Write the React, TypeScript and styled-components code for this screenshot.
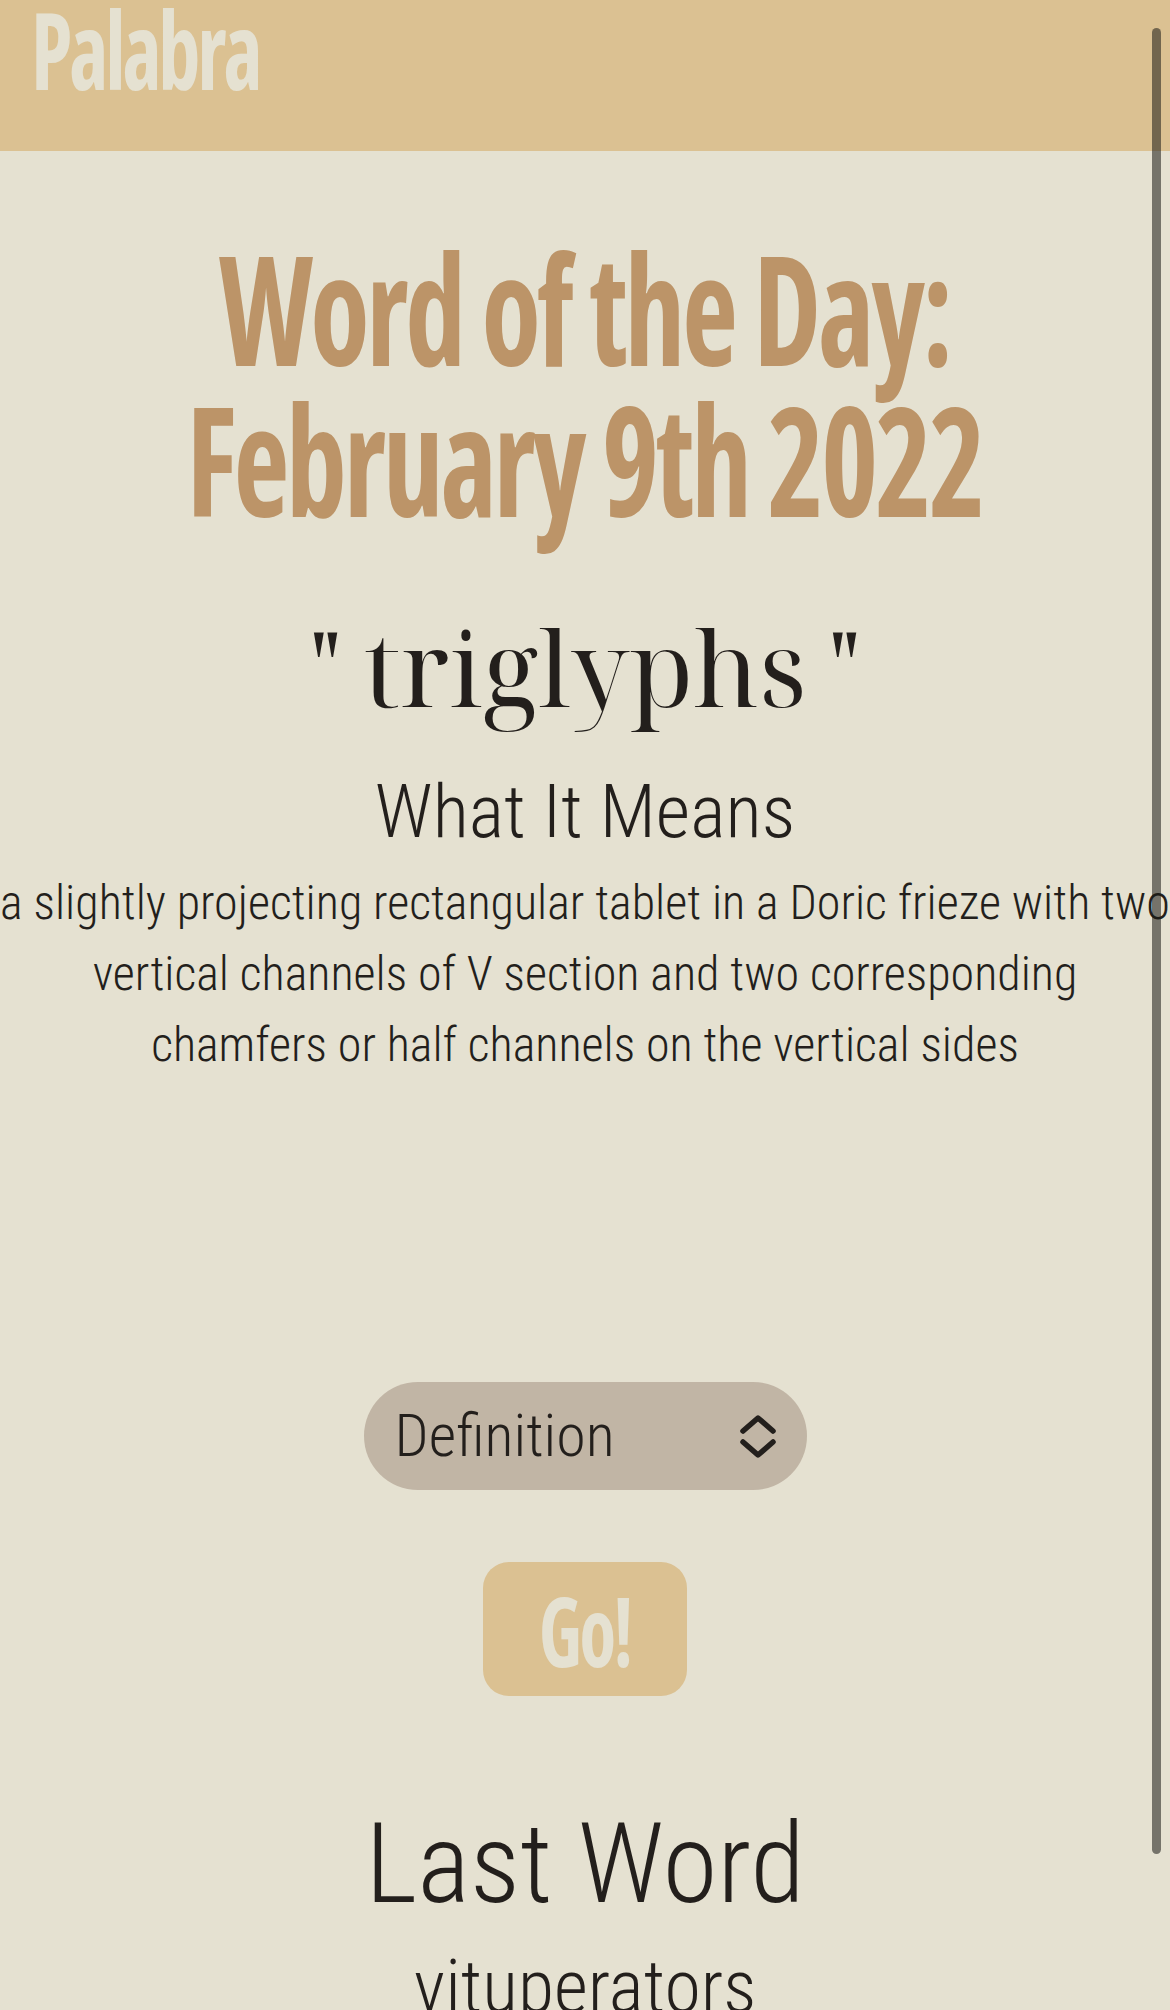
import React from "react";
import styled, { createGlobalStyle } from "styled-components";

const GlobalStyle = createGlobalStyle`
  html, body { margin: 0; padding: 0; }
  body {
    background: #e5e1d1;
    color: #231f1c;
    font-family: "Roboto Condensed", Roboto, sans-serif;
    overflow: hidden;
  }
`;

const Page = styled.div`
  width: 1170px;
  min-height: 2010px;
  background: #e5e1d1;
`;

const Header = styled.header`
  height: 151px;
  background: #dbc192;
  display: flex;
  align-items: flex-start;
  padding-left: 31px;
  box-sizing: border-box;
`;

const Logo = styled.h1`
  margin: 0;
  font-family: "Open Sans", sans-serif;
  font-stretch: 75%;
  font-weight: 700;
  font-size: 108px;
  line-height: 98px;
  letter-spacing: -4px;
  color: #e5e1d1;
  transform: scaleX(0.78);
  transform-origin: left center;
`;

const Main = styled.main`
  display: flex;
  flex-direction: column;
  align-items: center;
  text-align: center;
`;

const Title = styled.h2`
  margin: 81px 0 0;
  font-family: "Open Sans", sans-serif;
  font-stretch: 75%;
  font-weight: 700;
  font-size: 152px;
  line-height: 151px;
  letter-spacing: -4px;
  color: #bc9468;
  transform: scaleX(0.8);
`;

const Word = styled.div`
  margin-top: 68px;
  font-family: "Noto Serif Display", "Liberation Serif", serif;
  font-size: 104px;
  line-height: 130px;
  color: #231f1c;
`;

const Subhead = styled.h3`
  margin: 34px 0 0;
  font-weight: 300;
  font-size: 75px;
  line-height: 90px;
`;

const Definition = styled.p`
  margin: 11px 0 0;
  width: 1170px;
  font-weight: 300;
  font-size: 48px;
  line-height: 71px;
`;

const SelectWrap = styled.div`
  margin-top: 302px;
  width: 443px;
  height: 108px;
  border-radius: 54px;
  background: #c1b5a5;
  display: flex;
  align-items: center;
  justify-content: space-between;
  padding: 0 28px 0 31px;
  box-sizing: border-box;
`;

const SelectText = styled.span`
  font-weight: 300;
  font-size: 60px;
  line-height: 1;
  color: #231f1c;
`;

const GoButton = styled.button`
  margin-top: 72px;
  width: 204px;
  height: 134px;
  border: none;
  border-radius: 26px;
  background: #dbc192;
  font-family: "Open Sans", sans-serif;
  font-stretch: 75%;
  font-weight: 700;
  font-size: 96px;
  color: #e5e1d1;
  display: flex;
  align-items: center;
  justify-content: center;
  padding: 0;
`;

const GoLabel = styled.span`
  display: inline-block;
  letter-spacing: -3px;
  transform: scaleX(0.78);
`;

const LastTitle = styled.h3`
  margin: 103px 0 0;
  font-weight: 300;
  font-size: 112px;
  line-height: 130px;
`;

const LastWord = styled.div`
  margin-top: 13px;
  font-weight: 300;
  font-size: 74px;
  line-height: 90px;
`;

const Scrollbar = styled.div`
  position: fixed;
  top: 28px;
  right: 9px;
  width: 9px;
  height: 1826px;
  border-radius: 5px;
  background: rgba(26, 26, 22, 0.55);
`;

const Chevrons = () => (
  <svg width="42" height="50" viewBox="0 0 42 50" fill="none">
    <path d="M6 20 L21 7 L36 20" stroke="#231f1c" strokeWidth="5.5" strokeLinecap="round" strokeLinejoin="round" />
    <path d="M6 31 L21 44 L36 31" stroke="#231f1c" strokeWidth="5.5" strokeLinecap="round" strokeLinejoin="round" />
  </svg>
);

export default function App() {
  return (
    <Page>
      <GlobalStyle />
      <Header>
        <Logo>Palabra</Logo>
      </Header>
      <Main>
        <Title>
          Word of the Day:
          <br />
          February 9th 2022
        </Title>
        <Word>" triglyphs "</Word>
        <Subhead>What It Means</Subhead>
        <Definition>
          a slightly projecting rectangular tablet in a Doric frieze with two vertical channels of V section and two
          corresponding chamfers or half channels on the vertical sides
        </Definition>
        <SelectWrap>
          <SelectText>Definition</SelectText>
          <Chevrons />
        </SelectWrap>
        <GoButton>
          <GoLabel>Go!</GoLabel>
        </GoButton>
        <LastTitle>Last Word</LastTitle>
        <LastWord>vituperators</LastWord>
      </Main>
      <Scrollbar />
    </Page>
  );
}
